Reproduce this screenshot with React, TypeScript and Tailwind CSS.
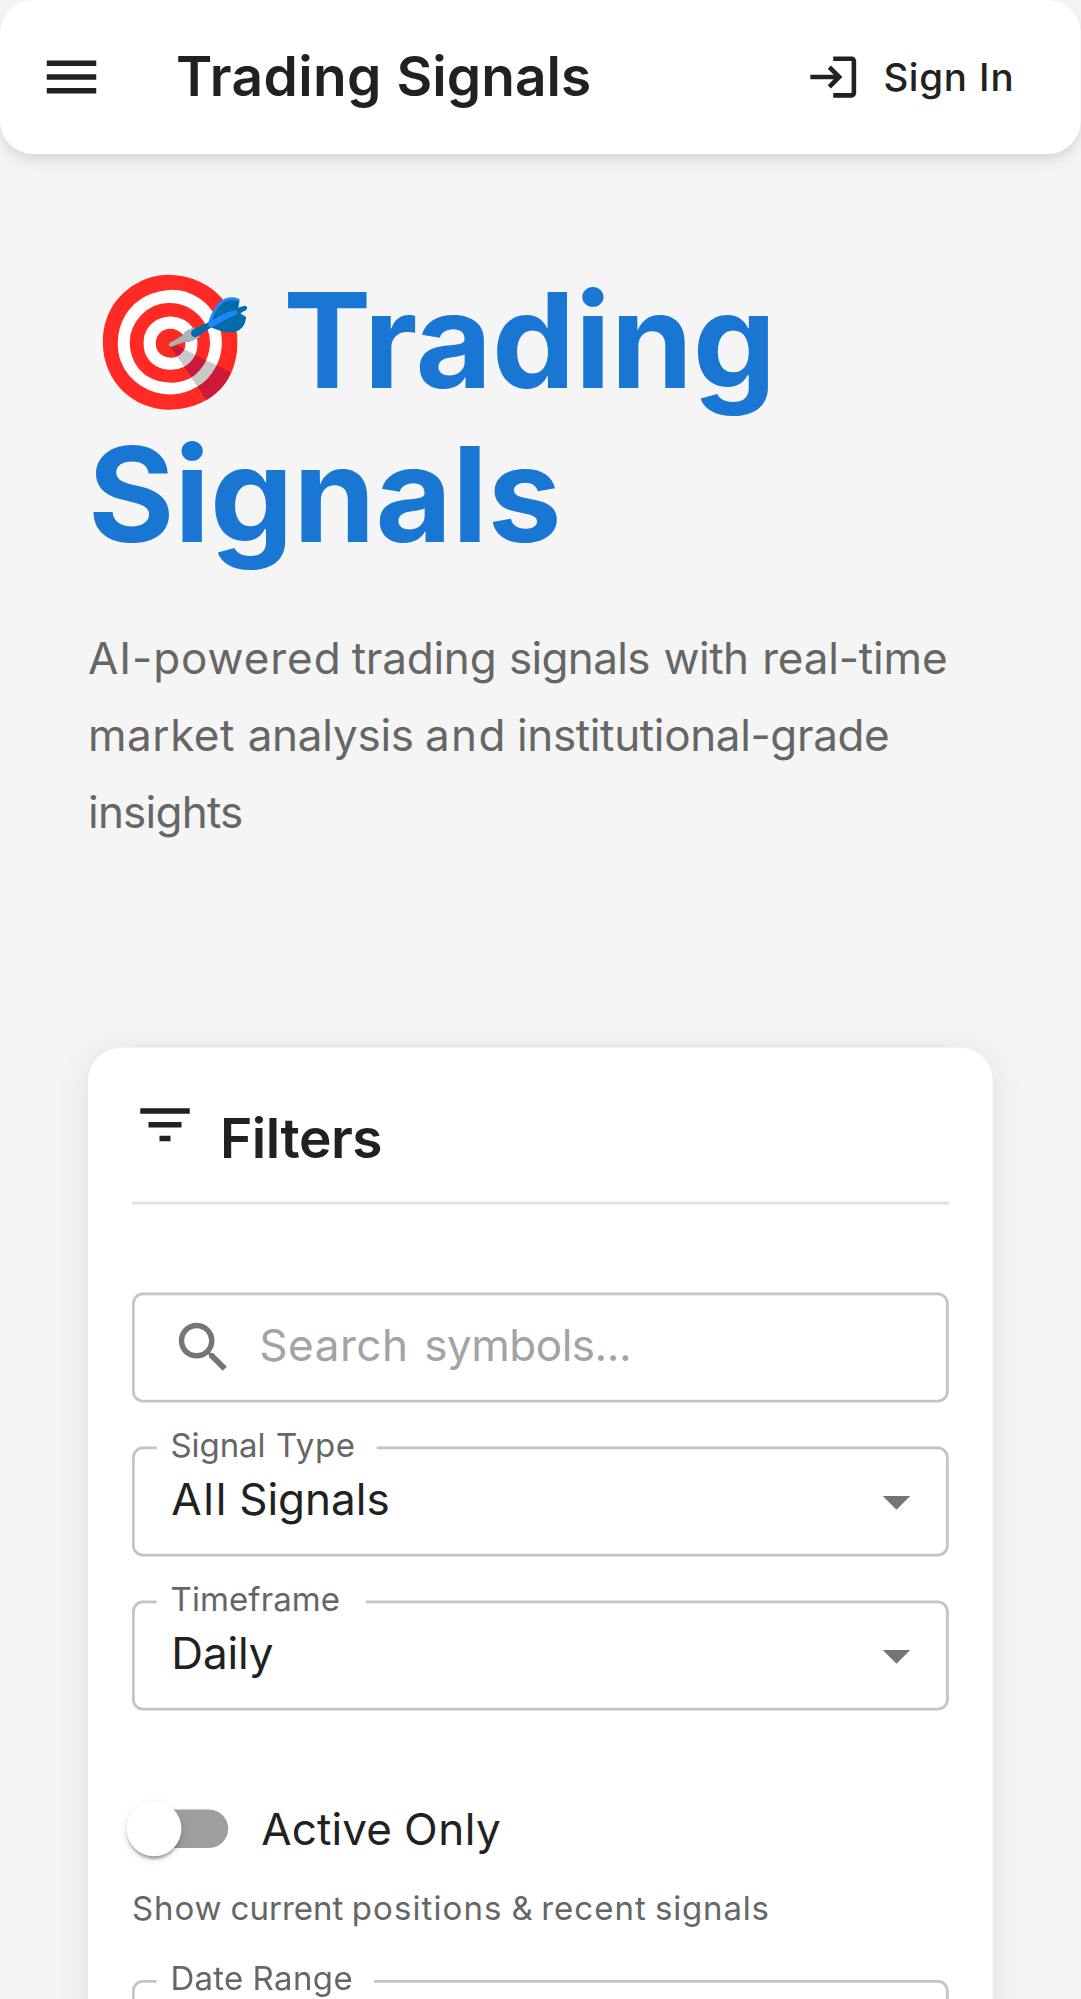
import type { ReactNode } from "react";

type IconProps = { path: string; className: string };

function Icon({ path, className }: IconProps) {
  return (
    <svg viewBox="0 0 24 24" fill="currentColor" className={className} aria-hidden="true">
      <path d={path} />
    </svg>
  );
}

const icons = {
  menu: "M3 18h18v-2H3zm0-5h18v-2H3zm0-7v2h18V6z",
  login:
    "M11 7 9.6 8.4l2.6 2.6H2v2h10.2l-2.6 2.6L11 17l5-5zm9 12h-8v2h8c1.1 0 2-.9 2-2V5c0-1.1-.9-2-2-2h-8v2h8z",
  filter: "M10 18h4v-2h-4zM3 6v2h18V6zm3 7h12v-2H6z",
  search:
    "M15.5 14h-.79l-.28-.27C15.41 12.59 16 11.11 16 9.5 16 5.91 13.09 3 9.5 3S3 5.91 3 9.5 5.91 16 9.5 16c1.61 0 3.09-.59 4.23-1.57l.27.28v.79l5 4.99L20.49 19zm-6 0C7.01 14 5 11.99 5 9.5S7.01 5 9.5 5 14 7.01 14 9.5 11.99 14 9.5 14",
  caret: "m7 10 5 5 5-5z",
};

/** A word with its own tracking and, where another word follows, its own advance. */
function W({ c, children }: { c: string; children: string }) {
  return <span className={`inline-block whitespace-pre ${c}`}>{children}</span>;
}

function SelectField({
  label,
  notch,
  children,
}: {
  label: ReactNode;
  notch: string;
  children?: ReactNode;
}) {
  return (
    <div className="relative flex h-10 items-center justify-between rounded border border-[#c4c4c4] pr-1.5 pl-[13.3px]">
      <span className={`absolute -top-2 left-2 h-4 bg-white ${notch}`} />
      <span className="absolute -top-[10px] left-[13.2px] origin-top-left scale-75 text-base leading-[23px] whitespace-nowrap text-[#666]">
        {label}
      </span>
      <span className="-mt-px text-base leading-[23px]">{children}</span>
      <Icon path={icons.caret} className="size-6 text-[#757575]" />
    </div>
  );
}

export default function App() {
  return (
    <div className="h-[1999px] w-[1081px] overflow-hidden bg-[#f5f5f5]">
      <div className="h-[727px] w-[393px] origin-top-left scale-[2.75] bg-[#f5f5f5] font-['Inter',sans-serif] text-[#212121]">
        <header className="flex h-14 items-center rounded-xl bg-white pl-3.5 shadow-[0_2px_4px_-1px_rgba(0,0,0,0.08),0_4px_5px_0_rgba(0,0,0,0.04),0_1px_10px_0_rgba(0,0,0,0.03)]">
          <Icon path={icons.menu} className="size-6" />
          <div className="ml-[26px] w-[229px] text-xl leading-8 font-semibold">
            <W c="w-[80.2px] tracking-[0.16px]">Trading </W>
            <W c="tracking-[0.02px]">Signals</W>
          </div>
          <button className="flex items-center text-sm leading-[24.5px] font-medium whitespace-nowrap">
            <Icon path={icons.login} className="mr-2 size-5" />
            <W c="w-[35px] tracking-[0.22px]">Sign </W>
            <W c="tracking-[0.35px]">In</W>
          </button>
        </header>

        <main className="px-8 pt-10">
          <h1 className="text-5xl leading-[56px] font-bold text-[#1976d2]">
            <W c="w-[71px]">🎯 </W>
            <W c="tracking-[-0.05px]">Trading</W>
            <br />
            <W c="tracking-[-0.03px]">Signals</W>
          </h1>
          <p className="mt-[17px] text-base leading-7 whitespace-nowrap text-[#666]">
            <W c="w-[95.9px] tracking-[0.34px]">AI-powered </W>
            <W c="w-[57.2px] tracking-[-0.08px]">trading </W>
            <W c="w-[56.2px] tracking-[-0.24px]">signals </W>
            <W c="w-[35.9px] tracking-[-0.18px]">with </W>
            <W c="tracking-[-0.06px]">real-time</W>
            <br />
            <W c="w-[58.05px] tracking-[0.2px]">market </W>
            <W c="w-[64.5px] tracking-[-0.09px]">analysis </W>
            <W c="w-[33.45px] tracking-[0.5px]">and </W>
            <W c="tracking-[-0.13px]">institutional-grade</W>
            <br />
            <W c="tracking-[-0.28px]">insights</W>
          </p>

          <section className="mt-[72px] h-[500px] w-[329px] rounded-xl bg-white px-4 pt-4 shadow-[0_2px_12px_0_rgba(0,0,0,0.1)]">
            <div className="flex h-[41px] items-start border-b border-[#e0e0e0]">
              <Icon path={icons.filter} className="size-6" />
              <h2 className="mt-px ml-2 text-xl leading-8 font-semibold tracking-[-0.17px]">
                Filters
              </h2>
            </div>

            <div className="mt-8 flex flex-col gap-4">
              <div className="flex h-10 items-center rounded border border-[#c4c4c4] pl-[13px]">
                <Icon path={icons.search} className="size-6 text-[#757575]" />
                <span className="-mt-px ml-[8.3px] text-base leading-[23px] text-[#a3a3a3]">
                  <W c="w-[60px] tracking-[0.2px]">Search </W>
                  <W c="tracking-[-0.18px]">symbols...</W>
                </span>
              </div>
              <SelectField
                label={
                  <>
                    <W c="w-[51.1px] tracking-[-0.04px]">Signal </W>
                    <W c="tracking-[0.3px]">Type</W>
                  </>
                }
                notch="w-20"
              >
                <W c="w-[24.7px] tracking-[0.6px]">All </W>
                <W c="">Signals</W>
              </SelectField>
              <SelectField label={<W c="tracking-[0.05px]">Timeframe</W>} notch="w-[76px]">
                <W c="tracking-[-0.05px]">Daily</W>
              </SelectField>
            </div>

            <div className="mt-6 flex h-[38px] items-center">
              <div className="relative mr-3 ml-px h-3.5 w-[34px] rounded-full bg-[#9e9e9e]">
                <div className="absolute -top-[3px] -left-[3px] size-5 rounded-full bg-white shadow-[0_2px_1px_-1px_rgba(0,0,0,0.2),0_1px_1px_0_rgba(0,0,0,0.14),0_1px_3px_0_rgba(0,0,0,0.12)]" />
              </div>
              <span className="text-base leading-6">
                <W c="w-[51.9px] tracking-[0.05px]">Active </W>
                <W c="tracking-[0.2px]">Only</W>
              </span>
            </div>
            <p className="text-xs leading-5 whitespace-nowrap text-[#666]">
              <W c="w-[35.85px] tracking-[0.32px]">Show </W>
              <W c="w-[44.05px]">current </W>
              <W c="w-[58.1px] tracking-[0.4px]">positions </W>
              <W c="w-[10.8px]">&amp; </W>
              <W c="w-[41.4px] tracking-[0.38px]">recent </W>
              <W c="tracking-[0.3px]">signals</W>
            </p>
            <div className="mt-4">
              <SelectField
                label={
                  <>
                    <W c="w-[39.8px] tracking-[0.12px]">Date </W>
                    <W c="tracking-[0.18px]">Range</W>
                  </>
                }
                notch="w-[79px]"
              />
            </div>
          </section>
        </main>
      </div>
    </div>
  );
}
